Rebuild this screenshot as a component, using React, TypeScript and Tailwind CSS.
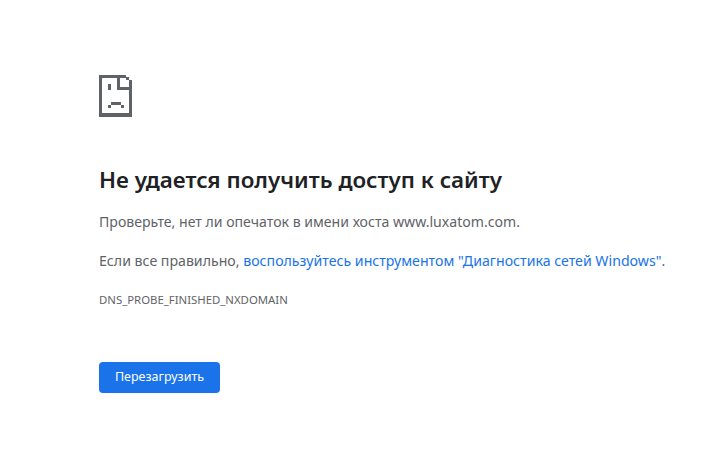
export default function App() {
  return (
    <div className="min-h-screen bg-white pl-[99px] pt-[75px] text-[#5f6368] font-['Noto_Sans','Open_Sans',sans-serif]">
      <svg width="34" height="42" viewBox="0 0 34 42" shapeRendering="crispEdges" className="block">
        {/* page outline */}
        <path fill="#5f6368" d="M0 0h27v3H3v35h27V8h3v34H0z" />
        {/* stepped corner and fold */}
        <path fill="#5f6368" d="M27 2h3v3h-3zM30 5h3v3h-3zM18 0h3v12h12v3H18z" />
        {/* left eye, right one merges into the fold */}
        <path fill="#5f6368" d="M9 9h3v6H9z" />
        {/* frown */}
        <path fill="#5f6368" d="M12 27h10v3H12zM9 30h3v3H9zM22 30h3v3h-3z" />
      </svg>
      <h1 className="mt-[47px] text-[22.4px] leading-[32px] font-semibold text-[#202124] whitespace-nowrap">Не удается получить доступ к сайту</h1>
      <p className="mt-[15px] text-[14.1px] leading-[21px] whitespace-nowrap">Проверьте, нет ли опечаток в имени хоста www.luxatom.com.</p>
      <p className="mt-[18px] text-[14.15px] leading-[21px] whitespace-nowrap">
        Если все правильно, <span className="text-[#1a73e8]">воспользуйтесь инструментом "Диагностика сетей Windows"</span>.
      </p>
      <p className="mt-[21px] text-[11.36px] leading-[16px] whitespace-nowrap">DNS_PROBE_FINISHED_NXDOMAIN</p>
      <button className="mt-[54px] block h-[31px] w-[121px] rounded bg-[#1a73e8] text-[12.5px] text-white">Перезагрузить</button>
    </div>
  )
}
